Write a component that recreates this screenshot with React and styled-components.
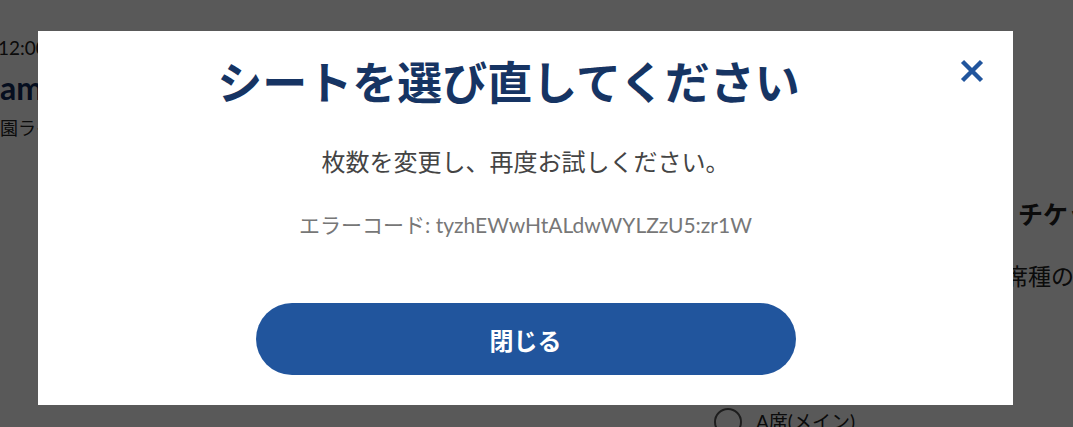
import React from 'react';
import styled, { createGlobalStyle } from 'styled-components';

const GlobalStyle = createGlobalStyle`
  html, body {
    margin: 0;
    padding: 0;
    background: #ffffff;
    font-family: Lato, "Noto Sans CJK JP", sans-serif;
    overflow: hidden;
  }
`;

// Page behind the dialog
const Page = styled.div`
  display: flex;
  justify-content: space-between;
  height: 427px;
  overflow: hidden;
  color: #222;
  white-space: nowrap;
`;

const LeftColumn = styled.div`
  display: flex;
  flex-direction: column;
  padding-top: 36px;
`;

const Time = styled.div`
  font-size: 19px;
  line-height: 24px;
  margin-left: -2px;
`;

const EventTitle = styled.div`
  font-size: 32px;
  font-weight: 700;
  color: #0f2a5a;
  line-height: 40px;
  margin-top: 8px;
`;

const Venue = styled.div`
  font-size: 18px;
  line-height: 24px;
  margin-top: 8px;
`;

const RightColumn = styled.div`
  display: flex;
  flex-direction: column;
  width: 359px;
  flex-shrink: 0;
  padding-top: 196px;
`;

const SectionHead = styled.div`
  font-size: 25px;
  font-weight: 700;
  line-height: 36px;
  padding-left: 304px;
`;

const SectionText = styled.div`
  font-size: 23px;
  line-height: 28px;
  margin-top: 30px;
  padding-left: 291px;
`;

const RadioRow = styled.div`
  display: flex;
  align-items: center;
  gap: 14px;
  margin-top: 118px;
  font-size: 19px;
  line-height: 28px;
`;

const RadioCircle = styled.span`
  width: 24px;
  height: 24px;
  border: 2px solid #555;
  border-radius: 50%;
`;

// Dialog
const Overlay = styled.div`
  position: fixed;
  inset: 0;
  background: rgba(0, 0, 0, 0.65);
  display: flex;
  align-items: flex-start;
  padding: 31px 0 0 38px;
`;

const Dialog = styled.div`
  position: relative;
  width: 975px;
  height: 374px;
  background: #fff;
  display: flex;
  flex-direction: column;
  align-items: center;
  box-sizing: border-box;
  padding-top: 24px;
`;

const CloseButton = styled.button`
  position: absolute;
  top: 24px;
  right: 25px;
  width: 32px;
  height: 32px;
  border: none;
  background: transparent;
  padding: 0;
  cursor: pointer;
  display: flex;
  align-items: center;
  justify-content: center;
`;

const Title = styled.h2`
  margin: 0;
  font-size: 45px;
  font-weight: 700;
  color: #163463;
  line-height: 56px;
  padding-right: 34px;
`;

const Message = styled.p`
  margin: 35px 0 0;
  font-size: 24px;
  line-height: 32px;
  color: #444;
`;

const ErrorCode = styled.p`
  margin: 33px 0 0;
  font-size: 21px;
  line-height: 28px;
  color: #777;
`;

const PrimaryButton = styled.button`
  margin-top: 64px;
  width: 540px;
  height: 72px;
  border: none;
  border-radius: 36px;
  background: #21559d;
  color: #fff;
  font-family: inherit;
  font-size: 24px;
  font-weight: 700;
  cursor: pointer;
`;

const CloseIcon = () => (
  <svg width="24" height="24" viewBox="0 0 24 24" fill="none">
    <path d="M2.5 2.5L21.5 21.5M21.5 2.5L2.5 21.5" stroke="#21559d" strokeWidth="4.4" />
  </svg>
);

export default function App() {
  return (
    <>
      <GlobalStyle />
      <Page>
        <LeftColumn>
          <Time>12:00</Time>
          <EventTitle>amusement</EventTitle>
          <Venue>園ライブ</Venue>
        </LeftColumn>
        <RightColumn>
          <SectionHead>チケット</SectionHead>
          <SectionText>席種の選択</SectionText>
          <RadioRow>
            <RadioCircle />
            A席(メイン)
          </RadioRow>
        </RightColumn>
      </Page>
      <Overlay>
        <Dialog>
          <CloseButton aria-label="閉じる">
            <CloseIcon />
          </CloseButton>
          <Title>シートを選び直してください</Title>
          <Message>枚数を変更し、再度お試しください。</Message>
          <ErrorCode>エラーコード: tyzhEWwHtALdwWYLZzU5:zr1W</ErrorCode>
          <PrimaryButton>閉じる</PrimaryButton>
        </Dialog>
      </Overlay>
    </>
  );
}
